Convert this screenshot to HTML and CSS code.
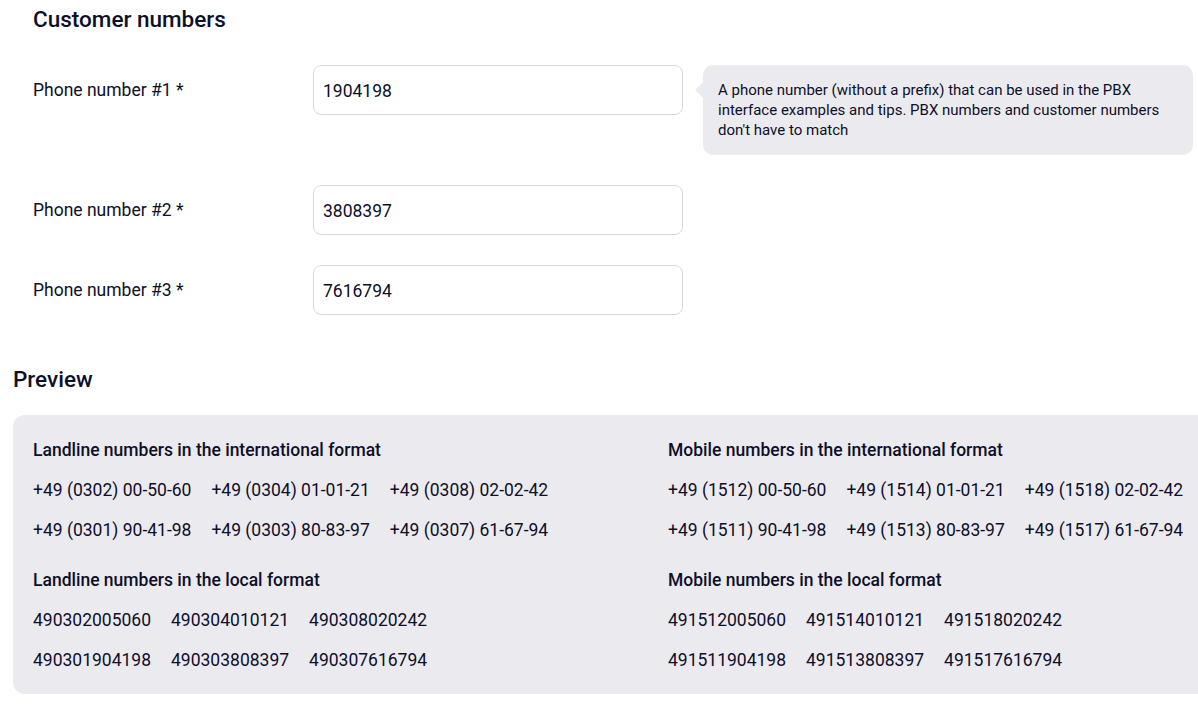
FILE: index.html
```html
<!DOCTYPE html>
<html lang="en">
<head>
    <meta charset="UTF-8">
    <meta name="viewport" content="width=device-width, initial-scale=1.0">
    <title>Customer numbers</title>
    <link rel="stylesheet" href="styles.css">
</head>
<body>
    <div class="page">
        <section class="customer">
            <h2 class="title">Customer numbers</h2>

            <div class="field">
                <label class="label" for="phone1">Phone number #1 *</label>
                <input class="input" id="phone1" type="text" value="1904198">
                <div class="hint">A phone number (without a prefix) that can be used in the PBX interface examples and tips. PBX numbers and customer numbers don't have to match</div>
            </div>

            <div class="field">
                <label class="label" for="phone2">Phone number #2 *</label>
                <input class="input" id="phone2" type="text" value="3808397">
            </div>

            <div class="field">
                <label class="label" for="phone3">Phone number #3 *</label>
                <input class="input" id="phone3" type="text" value="7616794">
            </div>
        </section>

        <h2 class="title preview-title">Preview</h2>

        <div class="preview">
            <div class="col">
                <div class="group">
                    <h3 class="group-title">Landline numbers in the international format</h3>
                    <div class="nums">
                        <span>+49 (0302) 00-50-60</span>
                        <span>+49 (0304) 01-01-21</span>
                        <span>+49 (0308) 02-02-42</span>
                    </div>
                    <div class="nums">
                        <span>+49 (0301) 90-41-98</span>
                        <span>+49 (0303) 80-83-97</span>
                        <span>+49 (0307) 61-67-94</span>
                    </div>
                </div>
                <div class="group">
                    <h3 class="group-title">Landline numbers in the local format</h3>
                    <div class="nums">
                        <span>490302005060</span>
                        <span>490304010121</span>
                        <span>490308020242</span>
                    </div>
                    <div class="nums">
                        <span>490301904198</span>
                        <span>490303808397</span>
                        <span>490307616794</span>
                    </div>
                </div>
            </div>

            <div class="col">
                <div class="group">
                    <h3 class="group-title">Mobile numbers in the international format</h3>
                    <div class="nums">
                        <span>+49 (1512) 00-50-60</span>
                        <span>+49 (1514) 01-01-21</span>
                        <span>+49 (1518) 02-02-42</span>
                    </div>
                    <div class="nums">
                        <span>+49 (1511) 90-41-98</span>
                        <span>+49 (1513) 80-83-97</span>
                        <span>+49 (1517) 61-67-94</span>
                    </div>
                </div>
                <div class="group">
                    <h3 class="group-title">Mobile numbers in the local format</h3>
                    <div class="nums">
                        <span>491512005060</span>
                        <span>491514010121</span>
                        <span>491518020242</span>
                    </div>
                    <div class="nums">
                        <span>491511904198</span>
                        <span>491513808397</span>
                        <span>491517616794</span>
                    </div>
                </div>
            </div>
        </div>
    </div>
</body>
</html>
```

FILE: styles.css
```css
body {
    margin: 0;
    font-family: Roboto, "Liberation Sans", sans-serif;
    color: #0e0f29; /* dark navy */
    background-color: #ffffff;
    overflow: hidden;
}

.page {
    padding: 0 0 0 13px;
}

.title {
    margin: 0;
    font-size: 22.5px;
    line-height: 24px;
    font-weight: 500;
}

.customer {
    padding: 7px 0 0 20px;
}

.customer .title {
    margin-bottom: 34px;
}

.field {
    display: flex;
    align-items: flex-start;
    margin-bottom: 30px;
}

.label {
    width: 280px;
    font-size: 17.5px;
    line-height: 50px;
}

.input {
    box-sizing: border-box;
    width: 370px;
    height: 50px;
    margin: 0;
    padding: 1px 9px 0;
    border: 1px solid #d9d8e1;
    border-radius: 8px;
    font-family: inherit;
    font-size: 17.5px;
    color: #0e0f29;
    background: #ffffff;
    outline: none;
}

.hint {
    position: relative;
    box-sizing: border-box;
    width: 490px;
    margin-left: 20px;
    padding: 15px;
    background-color: #ebeaef; /* light grey */
    border-radius: 10px;
    font-size: 15px;
    line-height: 20px;
}

.hint::before {
    content: "";
    position: absolute;
    left: -8px;
    top: 17px;
    border-top: 8px solid transparent;
    border-bottom: 8px solid transparent;
    border-right: 8px solid #ebeaef;
}

.preview-title {
    margin-top: 52px;
    margin-bottom: 24px;
}

.preview {
    display: grid;
    grid-template-columns: 635px 1fr;
    margin-right: -40px;
    padding: 25px 20px 24px;
    background-color: #ebeaef;
    border-radius: 12px;
}

.col {
    display: flex;
    flex-direction: column;
    gap: 30px;
}

.group {
    display: flex;
    flex-direction: column;
    gap: 20px;
}

.group-title {
    margin: 0;
    font-size: 17.5px;
    line-height: 20px;
    font-weight: 500;
}

.nums {
    display: flex;
    gap: 20px;
    font-size: 17.5px;
    line-height: 20px;
    white-space: nowrap;
}
```
